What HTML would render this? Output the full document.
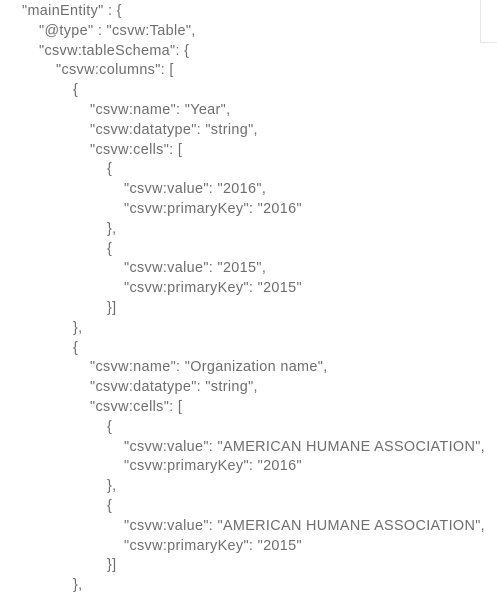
<!DOCTYPE html>
<html><head><meta charset="utf-8"><style>
html,body{margin:0;padding:0;background:#fff;width:497px;height:601px;overflow:hidden;position:relative}
.l{position:absolute;font-family:"Liberation Sans",sans-serif;font-size:14.4px;line-height:19px;color:#6e6e6e;letter-spacing:0.35px;white-space:pre}
.box{position:absolute;left:480px;top:-1px;width:20px;height:44px;border:1px solid #e4e4e4;box-sizing:border-box}
</style></head><body>
<div class="box"></div>
<div class="l" style="left:22px;top:2px">"mainEntity" : {</div>
<div class="l" style="left:39px;top:21.8px">"@type" : "csvw:Table",</div>
<div class="l" style="left:39px;top:41.6px">"csvw:tableSchema": {</div>
<div class="l" style="left:56px;top:61.4px">"csvw:columns": [</div>
<div class="l" style="left:73px;top:81.2px">{</div>
<div class="l" style="left:90px;top:101px">"csvw:name": "Year",</div>
<div class="l" style="left:90px;top:120.8px">"csvw:datatype": "string",</div>
<div class="l" style="left:90px;top:140.6px">"csvw:cells": [</div>
<div class="l" style="left:107px;top:160.4px">{</div>
<div class="l" style="left:124px;top:180.2px">"csvw:value": "2016",</div>
<div class="l" style="left:124px;top:200px">"csvw:primaryKey": "2016"</div>
<div class="l" style="left:107px;top:219.8px">},</div>
<div class="l" style="left:107px;top:239.6px">{</div>
<div class="l" style="left:124px;top:259.4px">"csvw:value": "2015",</div>
<div class="l" style="left:124px;top:279.2px">"csvw:primaryKey": "2015"</div>
<div class="l" style="left:107px;top:299px">}]</div>
<div class="l" style="left:73px;top:318.8px">},</div>
<div class="l" style="left:73px;top:338.6px">{</div>
<div class="l" style="left:90px;top:358.4px">"csvw:name": "Organization name",</div>
<div class="l" style="left:90px;top:378.2px">"csvw:datatype": "string",</div>
<div class="l" style="left:90px;top:398px">"csvw:cells": [</div>
<div class="l" style="left:107px;top:417.8px">{</div>
<div class="l" style="left:124px;top:437.6px">"csvw:value": "AMERICAN HUMANE ASSOCIATION",</div>
<div class="l" style="left:124px;top:457.4px">"csvw:primaryKey": "2016"</div>
<div class="l" style="left:107px;top:477.2px">},</div>
<div class="l" style="left:107px;top:497px">{</div>
<div class="l" style="left:124px;top:516.8px">"csvw:value": "AMERICAN HUMANE ASSOCIATION",</div>
<div class="l" style="left:124px;top:536.6px">"csvw:primaryKey": "2015"</div>
<div class="l" style="left:107px;top:556.4px">}]</div>
<div class="l" style="left:73px;top:576.2px">},</div>
</body></html>
